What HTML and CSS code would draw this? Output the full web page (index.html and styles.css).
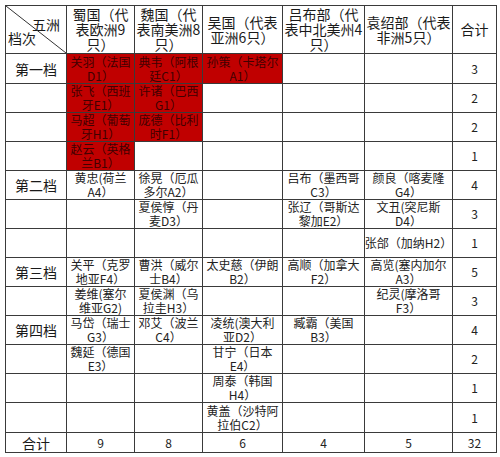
FILE: index.html
```html
<!DOCTYPE html>
<html lang="zh-CN">
<head>
<meta charset="utf-8">
<title>分档表</title>
<link rel="stylesheet" href="styles.css">
</head>
<body>
<div class="sheet">
  <div class="cell diag">
    <svg class="diag-line" viewBox="0 0 60 47" preserveAspectRatio="none"><line x1="0" y1="0" x2="60" y2="47" stroke="#333" stroke-width="1"/></svg>
    <span class="diag-top">五洲</span>
    <span class="diag-bot">档次</span>
  </div>
  <div class="cell h">蜀国（代表欧洲9只）</div>
  <div class="cell h">魏国（代表南美洲8只）</div>
  <div class="cell h">吴国（代表亚洲6只）</div>
  <div class="cell h">吕布部（代表中北美州4只）</div>
  <div class="cell h">袁绍部（代表非洲5只）</div>
  <div class="cell h">合计</div>

  <div class="cell lv">第一档</div>
  <div class="cell r">关羽（法国D1）</div>
  <div class="cell r">典韦（阿根廷C1）</div>
  <div class="cell r">孙策（卡塔尔A1）</div>
  <div class="cell"></div>
  <div class="cell"></div>
  <div class="cell n">3</div>

  <div class="cell lv"></div>
  <div class="cell r">张飞（西班牙E1）</div>
  <div class="cell r">许诸（巴西G1）</div>
  <div class="cell"></div>
  <div class="cell"></div>
  <div class="cell"></div>
  <div class="cell n">2</div>

  <div class="cell lv"></div>
  <div class="cell r">马超（葡萄牙H1）</div>
  <div class="cell r">庞德（比利时F1）</div>
  <div class="cell"></div>
  <div class="cell"></div>
  <div class="cell"></div>
  <div class="cell n">2</div>

  <div class="cell lv"></div>
  <div class="cell r">赵云（英格兰B1）</div>
  <div class="cell"></div>
  <div class="cell"></div>
  <div class="cell"></div>
  <div class="cell"></div>
  <div class="cell n">1</div>

  <div class="cell lv">第二档</div>
  <div class="cell">黄忠(荷兰A4）</div>
  <div class="cell">徐晃（厄瓜多尔A2）</div>
  <div class="cell"></div>
  <div class="cell">吕布（墨西哥C3）</div>
  <div class="cell">颜良（喀麦隆G4）</div>
  <div class="cell n">4</div>

  <div class="cell lv"></div>
  <div class="cell"></div>
  <div class="cell">夏侯惇（丹麦D3）</div>
  <div class="cell"></div>
  <div class="cell">张辽（哥斯达黎加E2）</div>
  <div class="cell">文丑(突尼斯D4）</div>
  <div class="cell n">3</div>

  <div class="cell lv"></div>
  <div class="cell"></div>
  <div class="cell"></div>
  <div class="cell"></div>
  <div class="cell"></div>
  <div class="cell nw">张郃（加纳H2）</div>
  <div class="cell n">1</div>

  <div class="cell lv">第三档</div>
  <div class="cell">关平（克罗地亚F4）</div>
  <div class="cell">曹洪（威尔士B4）</div>
  <div class="cell">太史慈（伊朗B2）</div>
  <div class="cell">高顺（加拿大F2）</div>
  <div class="cell">高览(塞内加尔A3）</div>
  <div class="cell n">5</div>

  <div class="cell lv"></div>
  <div class="cell">姜维(塞尔维亚G2)</div>
  <div class="cell">夏侯渊（乌拉圭H3）</div>
  <div class="cell"></div>
  <div class="cell"></div>
  <div class="cell">纪灵(摩洛哥F3）</div>
  <div class="cell n">3</div>

  <div class="cell lv">第四档</div>
  <div class="cell">马岱（瑞士G3）</div>
  <div class="cell">邓艾（波兰C4）</div>
  <div class="cell">凌统(澳大利亚D2）</div>
  <div class="cell">臧霸（美国B3）</div>
  <div class="cell"></div>
  <div class="cell n">4</div>

  <div class="cell lv"></div>
  <div class="cell">魏延（德国E3）</div>
  <div class="cell"></div>
  <div class="cell">甘宁（日本E4）</div>
  <div class="cell"></div>
  <div class="cell"></div>
  <div class="cell n">2</div>

  <div class="cell lv"></div>
  <div class="cell"></div>
  <div class="cell"></div>
  <div class="cell">周泰（韩国H4）</div>
  <div class="cell"></div>
  <div class="cell"></div>
  <div class="cell n">1</div>

  <div class="cell lv"></div>
  <div class="cell"></div>
  <div class="cell"></div>
  <div class="cell">黄盖（沙特阿拉伯C2）</div>
  <div class="cell"></div>
  <div class="cell"></div>
  <div class="cell n">1</div>

  <div class="cell lv">合计</div>
  <div class="cell n">9</div>
  <div class="cell n">8</div>
  <div class="cell n">6</div>
  <div class="cell n">4</div>
  <div class="cell n">5</div>
  <div class="cell n">32</div>
</div>
</body>
</html>
```
FILE: styles.css
```css
html, body {
  margin: 0;
  padding: 0;
  background: #ffffff;
}

body {
  font-family: "Noto Sans CJK SC", "Noto Sans", sans-serif;
  color: #222222;
}

.sheet {
  display: grid;
  grid-template-columns: 60px 67px 67px 79px 81px 87px 43px;
  grid-template-rows: 47px 29px repeat(11, 28px) 29px 19px;
  gap: 1px;
  padding: 1px;
  background: #3a3a3a;
  width: max-content;
  margin: 5px 0 0 5px;
}

.cell {
  background: #ffffff;
  display: flex;
  align-items: center;
  justify-content: center;
  text-align: center;
  font-size: 12px;
  line-height: 14px;
  padding: 0 3px;
  box-sizing: border-box;
  word-break: normal;
  line-break: strict;
}

.cell.r {
  background: #c00000;
  color: #400000;
}

.cell.h {
  font-size: 14px;
  line-height: 15px;
  padding: 0 1px;
  color: #1a1a1a;
}

.cell.lv {
  font-size: 14px;
  line-height: 16px;
  color: #1a1a1a;
}

.cell.n {
  font-size: 12px;
}

.cell.nw {
  white-space: nowrap;
  padding: 0;
}

.diag {
  position: relative;
  flex-direction: column;
  align-items: stretch;
  justify-content: center;
  font-size: 14px;
  line-height: 15px;
  padding: 3px 2px 0 2px;
  color: #1a1a1a;
}

.diag-line {
  position: absolute;
  left: 0;
  top: 0;
  width: 100%;
  height: 100%;
}

.diag-top {
  text-align: right;
  padding-right: 4px;
  margin-bottom: -1px;
}

.diag-bot {
  text-align: left;
}
```
